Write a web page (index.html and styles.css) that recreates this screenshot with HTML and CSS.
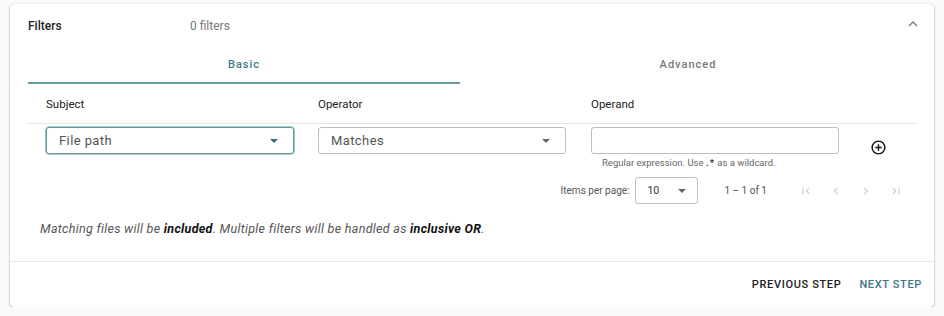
FILE: index.html
```html
<!DOCTYPE html>
<html lang="en">
<head>
    <meta charset="UTF-8">
    <meta name="viewport" content="width=device-width, initial-scale=1.0">
    <title>Filters</title>
    <link rel="stylesheet" href="styles.css">
</head>
<body>
    <div class="card">
        <div class="card-header">
            <span class="card-title">Filters</span>
            <span class="card-desc">0 filters</span>
            <svg class="chevron" width="10" height="6" viewBox="0 0 10 6">
                <path d="M1 5 L5 1 L9 5" fill="none" stroke="#777" stroke-width="1.3"/>
            </svg>
        </div>

        <div class="card-body">
            <div class="tabs">
                <div class="tab active">Basic</div>
                <div class="tab wide">Advanced</div>
            </div>

            <div class="table">
                <div class="row head">
                    <div class="cell">Subject</div>
                    <div class="cell">Operator</div>
                    <div class="cell">Operand</div>
                    <div class="cell"></div>
                </div>
                <div class="row">
                    <div class="cell">
                        <div class="select focused">
                            <span>File path</span>
                            <span class="arrow teal"></span>
                        </div>
                    </div>
                    <div class="cell">
                        <div class="select">
                            <span>Matches</span>
                            <span class="arrow"></span>
                        </div>
                    </div>
                    <div class="cell">
                        <div class="select"></div>
                        <div class="hint">Regular expression. Use <code>.*</code> as a wildcard.</div>
                    </div>
                    <div class="cell">
                        <svg class="add-icon" width="17" height="17" viewBox="0 0 24 24">
                            <circle cx="12" cy="12" r="9" fill="none" stroke="#111" stroke-width="2"/>
                            <path d="M12 7.5v9M7.5 12h9" stroke="#111" stroke-width="2"/>
                        </svg>
                    </div>
                </div>
            </div>

            <div class="paginator">
                <span class="page-label">Items per page:</span>
                <div class="page-size">
                    <span>10</span>
                    <span class="arrow"></span>
                </div>
                <span class="range">1 – 1 of 1</span>
                <div class="page-buttons">
                    <svg width="14" height="14" viewBox="0 0 24 24"><path d="M18.4 16.6L13.8 12l4.6-4.6L17 6l-6 6 6 6zM6 6h2v12H6z" fill="#ccc"/></svg>
                    <svg width="14" height="14" viewBox="0 0 24 24"><path d="M15.4 7.4L14 6l-6 6 6 6 1.4-1.4-4.6-4.6z" fill="#ccc"/></svg>
                    <svg width="14" height="14" viewBox="0 0 24 24"><path d="M10 6L8.6 7.4l4.6 4.6-4.6 4.6L10 18l6-6z" fill="#ccc"/></svg>
                    <svg width="14" height="14" viewBox="0 0 24 24"><path d="M5.6 7.4L10.2 12l-4.6 4.6L7 18l6-6-6-6zM16 6h2v12h-2z" fill="#ccc"/></svg>
                </div>
            </div>

            <p class="note">Matching files will be <b>included</b>. Multiple filters will be handled as <b>inclusive OR</b>.</p>
        </div>

        <div class="actions">
            <button class="btn">Previous step</button>
            <button class="btn primary">Next step</button>
        </div>
    </div>
</body>
</html>
```

FILE: styles.css
```css
body {
    margin: 0;
    background-color: #fafafa;
    font-family: Roboto, "Noto Sans", sans-serif;
    color: #222;
}

.card {
    margin: 4px 0 0 10px;
    width: 924px;
    background: #fff;
    border-radius: 4px;
    box-shadow: 0 1px 3px rgba(0, 0, 0, 0.3), 0 1px 1px rgba(0, 0, 0, 0.1);
}

.card-header {
    display: flex;
    align-items: center;
    height: 43px;
    padding: 0 18px;
    font-size: 12px;
}

.card-title {
    width: 162px;
    color: #222;
    font-weight: 500;
}

.card-desc {
    flex: 1;
    color: #777;
}

.chevron {
    margin-right: -2px;
    margin-top: -3px;
}

.card-body {
    padding: 0 18px 24px;
}

.tabs {
    display: flex;
}

.tab {
    width: 432px;
    height: 35px;
    line-height: 36px;
    text-align: center;
    font-size: 11px;
    font-weight: 500;
    letter-spacing: 1px;
    color: #777;
    border-bottom: 2px solid transparent;
}

.tab.wide {
    width: 456px;
}

.tab.active {
    color: #3d7884;
    border-bottom-color: #659fa3;
}

.row {
    display: grid;
    grid-template-columns: 272px 273px 273px 1fr;
}

.row.head {
    height: 39px;
    align-items: center;
    border-bottom: 1px solid #e6e6e6;
    font-size: 11.5px;
    color: #222;
}

.cell {
    padding-left: 18px;
}

.row:not(.head) .cell {
    padding-top: 3px;
}

.select {
    display: flex;
    align-items: center;
    justify-content: space-between;
    box-sizing: border-box;
    width: 248px;
    height: 27px;
    padding: 0 12px;
    border: 1px solid #bdbdbd;
    border-radius: 3px;
    font-size: 13px;
    letter-spacing: 0.4px;
    color: #555;
}

.select.focused {
    border-color: #5f989c;
    box-shadow: 0 0 0 0.6px #5f989c;
}

.arrow {
    width: 0;
    height: 0;
    border-left: 4.5px solid transparent;
    border-right: 4.5px solid transparent;
    border-top: 4.5px solid #666;
    margin-right: 3px;
}

.arrow.teal {
    border-top-color: #35707a;
}

.hint {
    margin-top: 3px;
    padding-left: 11px;
    font-size: 9.5px;
    line-height: 12px;
    color: #666;
}

.hint code {
    font-family: Roboto, sans-serif;
    font-weight: 700;
    color: #333;
    letter-spacing: 1px;
}

.add-icon {
    margin: 12px 0 0 6px;
}

.paginator {
    display: flex;
    align-items: center;
    justify-content: flex-end;
    margin-top: 8px;
    height: 27px;
    font-size: 10px;
    color: #555;
}

.page-size {
    display: flex;
    align-items: center;
    justify-content: space-between;
    box-sizing: border-box;
    width: 63px;
    height: 27px;
    margin-left: 6px;
    padding: 0 11px 0 11px;
    border: 1px solid #bdbdbd;
    border-radius: 3px;
    font-size: 10.5px;
    color: #333;
}

.page-size .arrow {
    margin-right: 0;
}

.range {
    margin-left: 26px;
    margin-right: 32px;
}

.page-buttons {
    display: flex;
    gap: 16px;
    margin-right: 13px;
}

.note {
    margin: 17px 0 0 12px;
    font-size: 12.5px;
    line-height: 16px;
    font-style: italic;
    color: #555;
    letter-spacing: 0.3px;
}

.note b {
    color: #111;
}

.actions {
    display: flex;
    justify-content: flex-end;
    align-items: center;
    gap: 18px;
    height: 45px;
    padding-right: 12px;
    border-top: 1px solid #e6e6e6;
}

.btn {
    padding: 0;
    border: none;
    background: none;
    font-family: Roboto, sans-serif;
    font-size: 11px;
    font-weight: 500;
    letter-spacing: 0.65px;
    text-transform: uppercase;
    color: #222;
}

.btn.primary {
    color: #3d7884;
}
```
